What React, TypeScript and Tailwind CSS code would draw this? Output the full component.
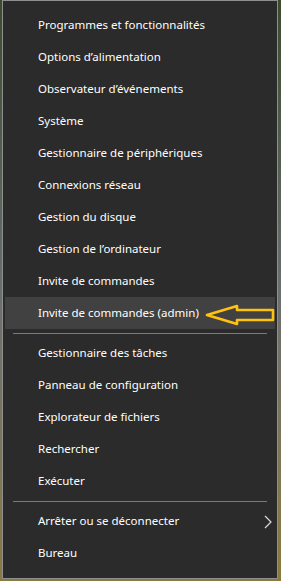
import React from "react";

const groups: string[][] = [
  [
    "Programmes et fonctionnalités",
    "Options d’alimentation",
    "Observateur d’événements",
    "Système",
    "Gestionnaire de périphériques",
    "Connexions réseau",
    "Gestion du disque",
    "Gestion de l’ordinateur",
    "Invite de commandes",
    "Invite de commandes (admin)",
  ],
  [
    "Gestionnaire des tâches",
    "Panneau de configuration",
    "Explorateur de fichiers",
    "Rechercher",
    "Exécuter",
  ],
  ["Arrêter ou se déconnecter", "Bureau"],
];

function Arrow() {
  return (
    <svg className="absolute left-[196px] top-[6px]" width="76" height="24" viewBox="0 0 76 24">
      <polygon
        points="6,12 36,3 36,7 72,7 72,17 36,17 36,21"
        fill="none"
        stroke="#ffc20e"
        strokeWidth="2.6"
        strokeLinejoin="round"
      />
    </svg>
  );
}

function Chevron() {
  return (
    <svg className="absolute left-[257px] top-[10px]" width="12" height="14" viewBox="0 0 12 14">
      <polyline points="3,1 9,7 3,13" fill="none" stroke="#dcdcdc" strokeWidth="1.2" />
    </svg>
  );
}

export default function App() {
  return (
    <div className="w-[281px] h-[581px] bg-gradient-to-b from-[#3d4a2e] via-[#6a6f70] to-[#8a7a40] pl-[2px] pr-[3px] pb-[2px] overflow-hidden">
      <div
        className="w-[276px] h-[579px] bg-[#2b2b2b] border border-[#8f8f8f] pt-[8px] text-white text-[11.5px]"
        style={{ fontFamily: '"Segoe UI", "Noto Sans", "Open Sans", sans-serif' }}
      >
        {groups.map((g, gi) => (
          <div key={gi}>
            {gi > 0 && (
              <div className="h-[8px] flex items-center px-[10px]">
                <div className="h-px w-full bg-[#7a7a7a]" />
              </div>
            )}
            {g.map((item) => {
              const hl = item === "Invite de commandes (admin)";
              const sub = item === "Arrêter ou se déconnecter";
              return (
                <div
                  key={item}
                  className={`relative h-[32px] flex items-center mx-[2px] pl-[33px] ${hl ? "bg-[#414141]" : ""}`}
                >
                  <span className="leading-none">{item}</span>
                  {hl && <Arrow />}
                  {sub && <Chevron />}
                </div>
              );
            })}
          </div>
        ))}
      </div>
    </div>
  );
}
